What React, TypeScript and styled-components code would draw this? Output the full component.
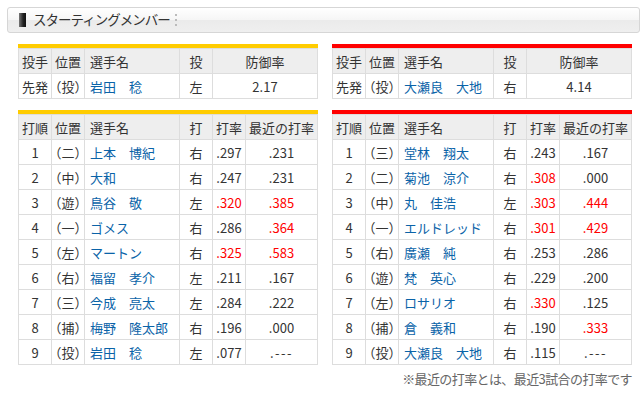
import React from "react";
import styled, { createGlobalStyle } from "styled-components";

const GlobalStyle = createGlobalStyle`
  body {
    margin: 0;
    background: #fff;
    font-family: "Noto Sans CJK JP", "Liberation Sans", sans-serif;
    color: #333;
  }
`;

const Page = styled.div`
  width: 642px;
  padding: 7px 2px 0 7px;
  box-sizing: border-box;
`;

const TitleBar = styled.div`
  height: 26px;
  box-sizing: border-box;
  border: 1px solid #d6d6d6;
  border-radius: 3px;
  background: linear-gradient(#ffffff 0%, #f6f6f6 48%, #ebebeb 52%, #efefef 100%);
  display: flex;
  align-items: center;
  padding-left: 11px;
`;

const TitleMark = styled.span`
  width: 7px;
  height: 14px;
  background: linear-gradient(to right, #777, #222 60%, #111);
  margin-right: 7px;
`;

const TitleText = styled.h2`
  margin: 0;
  font-size: 13.5px;
  font-weight: normal;
  color: #333;
  letter-spacing: -1px;
  line-height: 1;
`;

const DotSep = styled.span`
  display: flex;
  flex-direction: column;
  gap: 3px;
  margin-left: 5px;
  span {
    width: 2px;
    height: 2px;
    background: #bbb;
  }
`;

const Grid = styled.div`
  display: grid;
  grid-template-columns: 300px 300px;
  column-gap: 14px;
  row-gap: 11px;
  padding: 11px 0 0 11px;
`;

const TeamBlock = styled.div<{ $color: string }>`
  border-top: 4px solid ${(p) => p.$color};
`;

const Table = styled.table`
  width: 300px;
  border-collapse: collapse;
  table-layout: fixed;
  font-size: 13px;
  th,
  td {
    border: 1px solid #dddddd;
    padding: 0;
    text-align: center;
    white-space: nowrap;
    overflow: visible;
  }
  th {
    height: 24px;
    background: #eeeeee;
    font-weight: normal;
    color: #333;
  }
  td {
    height: 24px;
    background: #fff;
  }
`;

const NameHead = styled.th`
  && {
    text-align: left;
    padding-left: 5px;
  }
`;

const NameCell = styled.td`
  && {
    text-align: left;
    padding-left: 5px;
    color: #0a63a8;
  }
`;

const PosCell = styled.td`
  font-feature-settings: "halt";
`;

const Num = styled.td<{ $hot?: boolean; $blank?: boolean }>`
  && {
    color: ${(p) => (p.$hot ? "#ff0000" : "#333")};
    letter-spacing: ${(p) => (p.$blank ? "1.5px" : "0")};
  }
`;

const Note = styled.p`
  margin: 4px 8px 0 0;
  text-align: right;
  font-size: 13px;
  color: #666;
  letter-spacing: -0.6px;
`;

type Pitcher = { name: string; hand: string; era: string };
type Batter = {
  pos: string;
  name: string;
  hand: string;
  avg: string;
  avgHot?: boolean;
  recent: string;
  recentHot?: boolean;
};

const teams: { color: string; pitcher: Pitcher; lineup: Batter[] }[] = [
  {
    color: "#ffcc00",
    pitcher: { name: "岩田　稔", hand: "左", era: "2.17" },
    lineup: [
      { pos: "二", name: "上本　博紀", hand: "右", avg: ".297", recent: ".231" },
      { pos: "中", name: "大和", hand: "右", avg: ".247", recent: ".231" },
      { pos: "遊", name: "鳥谷　敬", hand: "左", avg: ".320", avgHot: true, recent: ".385", recentHot: true },
      { pos: "一", name: "ゴメス", hand: "右", avg: ".286", recent: ".364", recentHot: true },
      { pos: "左", name: "マートン", hand: "右", avg: ".325", avgHot: true, recent: ".583", recentHot: true },
      { pos: "右", name: "福留　孝介", hand: "左", avg: ".211", recent: ".167" },
      { pos: "三", name: "今成　亮太", hand: "左", avg: ".284", recent: ".222" },
      { pos: "捕", name: "梅野　隆太郎", hand: "右", avg: ".196", recent: ".000" },
      { pos: "投", name: "岩田　稔", hand: "左", avg: ".077", recent: ".---" },
    ],
  },
  {
    color: "#ff0000",
    pitcher: { name: "大瀬良　大地", hand: "右", era: "4.14" },
    lineup: [
      { pos: "三", name: "堂林　翔太", hand: "右", avg: ".243", recent: ".167" },
      { pos: "二", name: "菊池　涼介", hand: "右", avg: ".308", avgHot: true, recent: ".000" },
      { pos: "中", name: "丸　佳浩", hand: "左", avg: ".303", avgHot: true, recent: ".444", recentHot: true },
      { pos: "一", name: "エルドレッド", hand: "右", avg: ".301", avgHot: true, recent: ".429", recentHot: true },
      { pos: "右", name: "廣瀬　純", hand: "右", avg: ".253", recent: ".286" },
      { pos: "遊", name: "梵　英心", hand: "右", avg: ".229", recent: ".200" },
      { pos: "左", name: "ロサリオ", hand: "右", avg: ".330", avgHot: true, recent: ".125" },
      { pos: "捕", name: "倉　義和", hand: "右", avg: ".190", recent: ".333", recentHot: true },
      { pos: "投", name: "大瀬良　大地", hand: "右", avg: ".115", recent: ".---" },
    ],
  },
];

function PitcherTable({ color, p }: { color: string; p: Pitcher }) {
  return (
    <TeamBlock $color={color}>
      <Table>
        <colgroup>
          <col style={{ width: 33 }} />
          <col style={{ width: 33 }} />
          <col style={{ width: 95 }} />
          <col style={{ width: 33 }} />
          <col />
        </colgroup>
        <thead>
          <tr>
            <th>投手</th>
            <th>位置</th>
            <NameHead>選手名</NameHead>
            <th>投</th>
            <th>防御率</th>
          </tr>
        </thead>
        <tbody>
          <tr>
            <td>先発</td>
            <PosCell>（投）</PosCell>
            <NameCell>{p.name}</NameCell>
            <td>{p.hand}</td>
            <Num>{p.era}</Num>
          </tr>
        </tbody>
      </Table>
    </TeamBlock>
  );
}

function LineupTable({ color, rows }: { color: string; rows: Batter[] }) {
  return (
    <TeamBlock $color={color}>
      <Table>
        <colgroup>
          <col style={{ width: 33 }} />
          <col style={{ width: 33 }} />
          <col style={{ width: 95 }} />
          <col style={{ width: 33 }} />
          <col style={{ width: 33 }} />
          <col />
        </colgroup>
        <thead>
          <tr>
            <th>打順</th>
            <th>位置</th>
            <NameHead>選手名</NameHead>
            <th>打</th>
            <th>打率</th>
            <th>最近の打率</th>
          </tr>
        </thead>
        <tbody>
          {rows.map((b, i) => (
            <tr key={i}>
              <td>{i + 1}</td>
              <PosCell>（{b.pos}）</PosCell>
              <NameCell>{b.name}</NameCell>
              <td>{b.hand}</td>
              <Num $hot={b.avgHot}>{b.avg}</Num>
              <Num $hot={b.recentHot} $blank={b.recent === ".---"}>
                {b.recent}
              </Num>
            </tr>
          ))}
        </tbody>
      </Table>
    </TeamBlock>
  );
}

export default function App() {
  return (
    <Page>
      <GlobalStyle />
      <TitleBar>
        <TitleMark />
        <TitleText>スターティングメンバー</TitleText>
        <DotSep>
          <span />
          <span />
          <span />
        </DotSep>
      </TitleBar>
      <Grid>
        {teams.map((t) => (
          <PitcherTable key={"p" + t.color} color={t.color} p={t.pitcher} />
        ))}
        {teams.map((t) => (
          <LineupTable key={"l" + t.color} color={t.color} rows={t.lineup} />
        ))}
      </Grid>
      <Note>※最近の打率とは、最近3試合の打率です</Note>
    </Page>
  );
}
